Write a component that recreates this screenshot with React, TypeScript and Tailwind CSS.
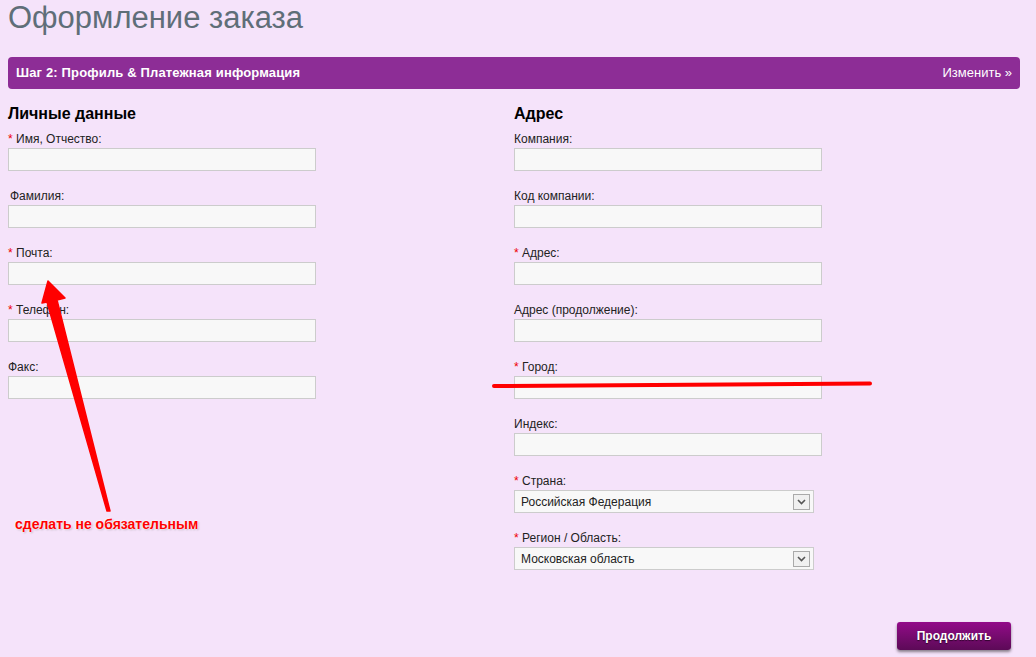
import React from 'react';

type Field = { label: string; required?: boolean; indent?: boolean; select?: string };

const personal: Field[] = [
  { label: 'Имя, Отчество:', required: true },
  { label: 'Фамилия:', indent: true },
  { label: 'Почта:', required: true },
  { label: 'Телефон:', required: true },
  { label: 'Факс:' },
];

const address: Field[] = [
  { label: 'Компания:' },
  { label: 'Код компании:' },
  { label: 'Адрес:', required: true },
  { label: 'Адрес (продолжение):' },
  { label: 'Город:', required: true },
  { label: 'Индекс:' },
  { label: 'Страна:', required: true, select: 'Российская Федерация' },
  { label: 'Регион / Область:', required: true, select: 'Московская область' },
];

function FormField({ field }: { field: Field }) {
  return (
    <div className="mb-[18px]">
      <label className={`block h-[14px] mb-[2px] text-[12px] leading-[14px] text-[#222] ${field.indent ? 'ml-[2px]' : ''}`}>
        {field.required && <span className="text-[#e00]">* </span>}
        {field.label}
      </label>
      {field.select ? (
        <div className="w-[300px] h-[23px] bg-[#f8f8f8] border border-[#ccc] flex items-center justify-between pl-[6px] pr-[3px]">
          <span className="text-[12px] text-[#222]">{field.select}</span>
          <span className="w-[17px] h-[16px] border border-[#aaa] bg-[#f0f0f0] flex items-center justify-center">
            <svg width="9" height="6" viewBox="0 0 9 6">
              <path d="M1 1 L4.5 4.5 L8 1" fill="none" stroke="#555" strokeWidth="1.6" />
            </svg>
          </span>
        </div>
      ) : (
        <input className="block w-[308px] h-[23px] bg-[#f8f8f8] border border-[#ccc] outline-none" />
      )}
    </div>
  );
}

export default function App() {
  return (
    <div className="relative bg-[#f5e3fa] min-h-screen w-[1036px] overflow-hidden pl-[8px] pr-[16px] font-['Liberation_Sans',Arial,sans-serif]">
      <h1 className="pt-[1px] text-[31px] leading-[34px] text-[#5f6e78] font-normal">Оформление заказа</h1>

      <div className="mt-[22px] h-[32px] bg-[#8d2d96] rounded-[4px] flex items-center justify-between px-[8px] text-white text-[13px]">
        <span className="font-bold tracking-[0.15px]">Шаг 2: Профиль &amp; Платежная информация</span>
        <span>Изменить »</span>
      </div>

      <div className="flex mt-[15px]">
        <div className="w-[506px]">
          <h2 className="text-[16px] leading-[20px] font-bold text-black mb-[8px]">Личные данные</h2>
          {personal.map((f) => (
            <FormField key={f.label} field={f} />
          ))}
        </div>
        <div className="flex-1">
          <h2 className="text-[16px] leading-[20px] font-bold text-black mb-[8px]">Адрес</h2>
          {address.map((f) => (
            <FormField key={f.label} field={f} />
          ))}
        </div>
      </div>

      <div className="flex justify-end pr-[9px] mt-[34px]">
        <button className="w-[114px] h-[28px] rounded-[3px] bg-gradient-to-b from-[#930a89] to-[#5c0a57] text-white font-bold text-[12px] shadow-[0_2px_3px_rgba(0,0,0,0.45)] [text-shadow:0_1px_1px_rgba(0,0,0,0.6)]">
          Продолжить
        </button>
      </div>

      {/* annotations drawn over the form */}
      <svg className="absolute left-0 top-0 pointer-events-none" width="1036" height="657">
        <polygon
          points="48,281 65,298 57,300 110,511 107,511 47,302 42,303"
          fill="#f00"
          stroke="#f00"
          strokeWidth="1.5"
          strokeLinejoin="round"
        />
        <line x1="494" y1="386" x2="870" y2="383.5" stroke="#f00" strokeWidth="4" strokeLinecap="round" />
      </svg>
      <span className="absolute left-[15px] top-[514px] text-[14px] font-bold text-[#f00] [text-shadow:0_0_2px_#fff,0_0_2px_#fff,1px_1px_2px_rgba(0,0,0,0.25)]">
        сделать не обязательным
      </span>
    </div>
  );
}
